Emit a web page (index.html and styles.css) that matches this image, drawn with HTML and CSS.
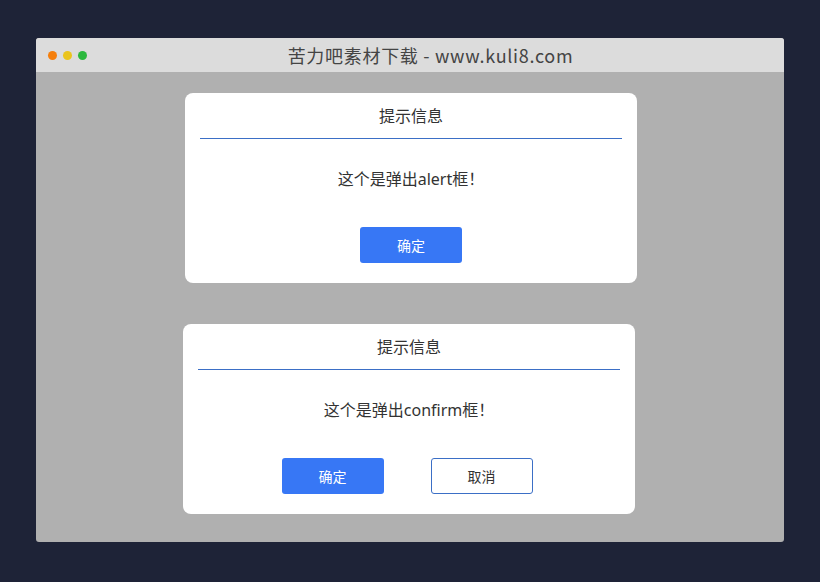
FILE: index.html
```html
<!DOCTYPE html>
<html lang="zh-CN">
<head>
    <meta charset="utf-8">
    <title>苦力吧素材下载</title>
    <link rel="stylesheet" href="styles.css">
</head>
<body>
    <div class="window">
        <div class="titlebar">
            <div class="dots">
                <span class="dot orange"></span>
                <span class="dot yellow"></span>
                <span class="dot green"></span>
            </div>
            <div class="title">苦力吧素材下载 - www.kuli8.com</div>
        </div>

        <div class="content">
            <div class="dialog dialog-alert">
                <div class="dialog-head">提示信息</div>
                <div class="dialog-msg">这个是弹出alert框<span class="punct">！</span></div>
                <div class="dialog-btns">
                    <button class="btn btn-ok">确定</button>
                </div>
            </div>

            <div class="dialog dialog-confirm">
                <div class="dialog-head">提示信息</div>
                <div class="dialog-msg">这个是弹出confirm框<span class="punct">！</span></div>
                <div class="dialog-btns">
                    <button class="btn btn-ok">确定</button>
                    <button class="btn btn-cancel">取消</button>
                </div>
            </div>
        </div>
    </div>
</body>
</html>
```

FILE: styles.css
```css
html, body {
    margin: 0;
    padding: 0;
}
body {
    background: #1e2337;
    font-family: "Noto Sans", "Noto Sans CJK SC", sans-serif;
    color: #333;
    padding: 38px 36px 0 36px;
}
.window {
    width: 748px;
    height: 504px;
    border-radius: 3px;
    overflow: hidden;
    background: #b0b0b0;
    display: flex;
    flex-direction: column;
}
.titlebar {
    height: 34px;
    background: #dcdcdc;
    display: flex;
    align-items: center;
}
.dots {
    display: flex;
    gap: 6px;
    padding-left: 12px;
}
.dot {
    width: 9px;
    height: 9px;
    border-radius: 50%;
}
.orange { background: #f57f0c; }
.yellow { background: #eac41d; }
.green { background: #2cb83e; }
.title {
    flex: 1;
    text-align: center;
    font-family: "Noto Sans CJK SC", sans-serif;
    font-size: 18px;
    color: #444;
    letter-spacing: 0.7px;
    padding-right: 10px;
    line-height: 34px;
}
.content {
    flex: 1;
    display: flex;
    flex-direction: column;
    align-items: center;
    padding-top: 21px;
    gap: 41px;
}
.dialog {
    width: 452px;
    height: 190px;
    background: #fff;
    border-radius: 8px;
    box-sizing: border-box;
    padding: 0 15px;
}
.dialog-alert { margin-left: 2px; }
.dialog-confirm { margin-right: 2px; }
.dialog-head {
    height: 44px;
    padding-top: 1px;
    line-height: 44px;
    text-align: center;
    font-size: 16px;
    border-bottom: 1px solid #3b6fc6;
}
.dialog-msg {
    margin-top: 28px;
    line-height: 24px;
    text-align: center;
    font-size: 16px;
}
.punct {
    display: inline-block;
    width: 1em;
    text-align: center;
}
.dialog-btns {
    margin-top: 36px;
    display: flex;
    justify-content: center;
    gap: 47px;
}
.dialog-confirm .dialog-btns {
    padding-right: 4px;
}
.btn {
    width: 102px;
    height: 36px;
    border-radius: 3px;
    font-family: inherit;
    font-size: 14px;
    cursor: pointer;
    box-sizing: border-box;
}
.btn-ok {
    background: #3777f5;
    color: #fff;
    border: none;
}
.btn-cancel {
    background: #fff;
    color: #333;
    border: 1px solid #3b6fc6;
}
```
